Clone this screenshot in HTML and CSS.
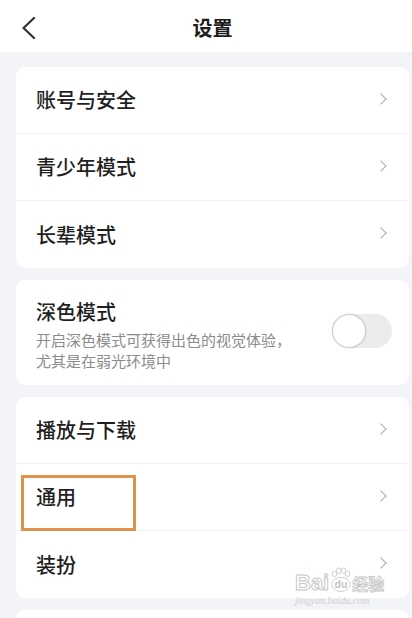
FILE: index.html
```html
<!DOCTYPE html>
<html lang="zh-CN">
<head>
  <meta charset="UTF-8">
  <title>设置</title>
  <meta name="viewport" content="width=device-width, initial-scale=1.0">
  <link rel="stylesheet" href="styles.css">
</head>
<body>
  <div class="screen">

    <!-- 顶部栏 -->
    <div class="header">
      <button class="btn-back">
        <svg width="14" height="22" viewBox="0 0 14 22"><polyline points="12,1 1.5,11 12,21" fill="none" stroke="#333" stroke-width="2.2" stroke-linecap="round" stroke-linejoin="round"/></svg>
      </button>
      <h1 class="title">设置</h1>
    </div>

    <div class="content">
      <div class="card">
        <div class="row"><span class="label">账号与安全</span><span class="chevron"></span></div>
        <div class="row"><span class="label">青少年模式</span><span class="chevron"></span></div>
        <div class="row"><span class="label">长辈模式</span><span class="chevron"></span></div>
      </div>

      <div class="card card-dark">
        <div class="dark-text">
          <div class="label">深色模式</div>
          <div class="desc">开启深色模式可获得出色的视觉体验，<br>尤其是在弱光环境中</div>
        </div>
        <div class="toggle"><div class="knob"></div></div>
      </div>

      <div class="card">
        <div class="row"><span class="label">播放与下载</span><span class="chevron"></span></div>
        <div class="row row-marked">
          <span class="label">通用</span><span class="chevron"></span>
          <div class="mark"></div>
        </div>
        <div class="row"><span class="label">装扮</span><span class="chevron"></span></div>
      </div>

      <div class="card"></div>
    </div>

    <!-- 水印 -->
    <div class="watermark">
      <div class="wm-main">
        <span class="wm-bai">Bai</span>
        <svg class="wm-paw" width="21" height="26" viewBox="0 0 24 28">
          <g fill="#fff" stroke="#c8c8c8" stroke-width="1">
            <ellipse cx="5" cy="7" rx="2.6" ry="3.2"/>
            <ellipse cx="10" cy="3.5" rx="2.6" ry="3.2"/>
            <ellipse cx="15.5" cy="3.5" rx="2.6" ry="3.2"/>
            <ellipse cx="20" cy="7" rx="2.6" ry="3.2"/>
            <ellipse cx="12.5" cy="19" rx="10.5" ry="8"/>
          </g>
          <text x="12.5" y="23" text-anchor="middle" font-family="Liberation Sans, sans-serif" font-size="12" font-weight="bold" fill="#c4c4c4">du</text>
        </svg>
        <span class="wm-jy">经验</span>
      </div>
      <div class="wm-url">jingyan.baidu.com</div>
    </div>
  </div>
</body>
</html>
```

FILE: styles.css
```css
body {
  margin: 0;
  font-family: "Noto Sans CJK SC", "Noto Sans", sans-serif;
  background-color: #f2f4f7;
  overflow: hidden;
}

.screen {
  position: relative;
  width: 425px;
  height: 618px;
  overflow: hidden;
}

.header {
  height: 52px;
  background-color: #fff;
  display: flex;
  align-items: center;
  justify-content: center;
  position: relative;
}

.btn-back {
  position: absolute;
  left: 21px;
  top: 16px;
  background: transparent;
  border: none;
  padding: 0;
  width: 16px;
  height: 24px;
  display: flex;
  align-items: center;
  justify-content: center;
}

.title {
  margin: 0;
  font-size: 20px;
  font-weight: bold;
  color: #1c1c1c;
  line-height: 1;
  padding-top: 4px;
}

.content {
  display: flex;
  flex-direction: column;
  gap: 12px;
  padding: 15px 16px 0;
}

.card {
  background-color: #fff;
  border-radius: 9px;
  min-height: 40px;
}

.row {
  height: 67px;
  display: flex;
  align-items: center;
  justify-content: space-between;
  padding: 0 22px 0 20px;
  border-bottom: 1px solid #f0f0f0;
  box-sizing: border-box;
}

.row:last-child {
  border-bottom: none;
}

.label {
  font-size: 20px;
  font-weight: 500;
  color: #1f1f1f;
  line-height: 28px;
}

.chevron {
  width: 7px;
  height: 7px;
  border-top: 1.5px solid #ababab;
  border-right: 1.5px solid #ababab;
  transform: rotate(45deg);
  margin-right: 2px;
  margin-bottom: 3px;
}

.card-dark {
  display: flex;
  align-items: center;
  justify-content: space-between;
  padding: 18px 17px 14px 20px;
}

.desc {
  margin-top: 3px;
  font-size: 15px;
  line-height: 21px;
  color: #8c8c8c;
}

.toggle {
  width: 60px;
  height: 34px;
  border-radius: 17px;
  background-color: #ececec;
  display: flex;
  align-items: center;
  padding: 1px;
  box-sizing: border-box;
  margin-top: -8px;
}

.knob {
  width: 32px;
  height: 32px;
  border-radius: 50%;
  background-color: #fff;
  box-shadow: 0 0 2px 1px rgba(0, 0, 0, 0.18);
}

.row-marked {
  position: relative;
}

.mark {
  position: absolute;
  left: 5px;
  top: 11px;
  width: 115px;
  height: 56px;
  border: 3px solid #e0914b;
  box-sizing: border-box;
}

.watermark {
  position: absolute;
  left: 295px;
  top: 567px;
}

.wm-main {
  display: flex;
  align-items: flex-end;
  gap: 1px;
}

.wm-bai {
  font-family: "Liberation Sans", sans-serif;
  font-size: 22px;
  font-weight: bold;
  color: #fff;
  -webkit-text-stroke: 1px #c8c8c8;
  line-height: 22px;
}

.wm-paw {
  margin-bottom: 1px;
}

.wm-jy {
  font-size: 16px;
  font-weight: bold;
  line-height: 21px;
  color: #fff;
  -webkit-text-stroke: 0.8px #c4c4c4;
}

.wm-url {
  font-family: "Liberation Serif", serif;
  font-style: italic;
  font-size: 10px;
  color: #d0d0d0;
  margin-top: 1px;
  line-height: 12px;
}
```
